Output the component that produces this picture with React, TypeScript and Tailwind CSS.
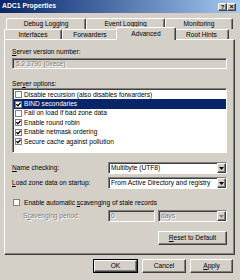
// App.tsx — ADC1 Properties (boîte de dialogue DNS, onglet Advanced), style Windows classique
import React from 'react';

const raised =
  'border border-t-white border-l-white border-r-[#404040] border-b-[#404040] shadow-[inset_-1px_-1px_0_#808080]';
const sunken =
  'border border-t-[#808080] border-l-[#808080] border-r-white border-b-white shadow-[inset_1px_1px_0_#404040]';
const emboss = 'text-[#808080] [text-shadow:1px_1px_0_#fff]';

function Check({ checked }: { checked?: boolean }) {
  return (
    <span className="w-[7px] h-[7px] flex-shrink-0 bg-white border border-[#808080] flex items-center justify-center">
      {checked && (
        <svg width="5" height="5" viewBox="0 0 5 5">
          <path d="M0.4 2.2 L1.9 3.8 L4.6 0.8" fill="none" stroke="#000" strokeWidth="1.3" />
        </svg>
      )}
    </span>
  );
}

function Select({ value, disabled, className = '' }: { value: string; disabled?: boolean; className?: string }) {
  return (
    <div className={`flex items-stretch h-[12px] ${sunken} ${disabled ? 'bg-[#d4d0c8]' : 'bg-white'} ${className}`}>
      <span className={`flex-1 pl-[2px] leading-[10px] whitespace-nowrap overflow-hidden ${disabled ? emboss : ''}`}>{value}</span>
      <span className={`w-[9px] bg-[#d4d0c8] flex items-center justify-center ${raised}`}>
        <svg width="5" height="3" viewBox="0 0 5 3">
          <path d="M0 0h5L2.5 3z" fill={disabled ? '#808080' : '#000'} />
        </svg>
      </span>
    </div>
  );
}

function Tab({ label, w, selected }: { label: string; w: number; selected?: boolean }) {
  return (
    <div
      style={{ width: w }}
      className={`flex items-center justify-center rounded-t-[2px] bg-[#d4d0c8] border-t border-l border-t-white border-l-white border-r border-r-[#404040] shadow-[inset_-1px_0_0_#808080] ${
        selected ? 'relative z-10 h-[13px] -mt-[2px] -mb-[1px] -mx-[2px] pb-[1px]' : 'h-full'
      }`}
    >
      {label}
    </div>
  );
}

const options = [
  { label: 'Disable recursion (also disables forwarders)', checked: false },
  { label: 'BIND secondaries', checked: true, active: true },
  { label: 'Fail on load if bad zone data', checked: false },
  { label: 'Enable round robin', checked: true },
  { label: 'Enable netmask ordering', checked: true },
  { label: 'Secure cache against pollution', checked: true },
];

export default function App() {
  return (
    <div className="w-[240px] h-[280px] bg-[#d4d0c8] flex flex-col overflow-hidden text-[6.6px] text-black font-['Liberation_Sans',Arial,sans-serif]">
      {/* Barre de titre */}
      <div className="h-[13px] flex items-center justify-between pl-[2px] pr-[4px] bg-gradient-to-r from-[#0a246a] to-[#a6caf0]">
        <span className="text-white font-bold text-[6.8px]">ADC1 Properties</span>
        <div className="flex">
          <span className={`w-[9px] h-[8px] bg-[#d4d0c8] flex items-center justify-center font-bold text-[6px] leading-none ${raised}`}>?</span>
          <span className={`w-[9px] h-[8px] bg-[#d4d0c8] flex items-center justify-center font-bold text-[7px] leading-none ${raised}`}>×</span>
        </div>
      </div>

      {/* Onglets */}
      <div className="flex ml-[6px] mt-[5px] h-[11px]">
        <Tab label="Debug Logging" w={80} />
        <Tab label="Event Logging" w={79} />
        <Tab label="Monitoring" w={68} />
      </div>
      <div className="flex ml-[4px] h-[10px]">
        <Tab label="Interfaces" w={58} />
        <Tab label="Forwarders" w={56} />
        <Tab label="Advanced" w={60} selected />
        <Tab label="Root Hints" w={55} />
      </div>

      {/* Panneau */}
      <div className="ml-[4px] w-[231px] h-[216px] flex flex-col px-[7px] border border-t-white border-l-white border-r-[#404040] border-b-[#404040] shadow-[inset_-1px_-1px_0_#808080]">
        <div className="mt-[7px] h-[9px] leading-[9px]">
          <u>S</u>erver version number:
        </div>
        <div className={`mt-[2px] h-[11px] pl-[3px] leading-[9px] bg-[#d4d0c8] ${sunken}`}>
          <span className={emboss}>5.2 3790 (0xece)</span>
        </div>

        <div className="mt-[10px] h-[9px] leading-[9px]">
          Ser<u>v</u>er options:
        </div>
        <div className={`h-[65px] bg-white pt-[1px] pl-[1px] ${sunken}`}>
          {options.map((o) => (
            <div
              key={o.label}
              className={`h-[9.4px] flex items-center pl-[1px] ${o.active ? 'bg-[#0a246a] text-white' : ''}`}
            >
              <Check checked={o.checked} />
              <span className="leading-[8px] px-[1px] ml-[1px]">{o.label}</span>
            </div>
          ))}
        </div>

        <div className="mt-[9px] flex items-center h-[12px]">
          <span className="w-[96px]">
            <u>N</u>ame checking:
          </span>
          <Select value="Multibyte (UTF8)" className="flex-1" />
        </div>
        <div className="mt-[3px] flex items-center h-[12px]">
          <span className="w-[96px]">
            <u>L</u>oad zone data on startup:
          </span>
          <Select value="From Active Directory and registry" className="flex-1" />
        </div>

        <div className="mt-[8px] flex items-center h-[11px] pl-[1px] gap-[4px]">
          <span className="w-[7px] h-[7px] bg-white border border-[#808080]" />
          <span>
            Enable automatic <u>s</u>cavenging of stale records
          </span>
        </div>
        <div className="mt-[2px] flex items-center h-[12px]">
          <span className={`w-[96px] pl-[11px] ${emboss}`}>
            S<u>c</u>avenging period:
          </span>
          <div className={`w-[47px] h-[12px] pl-[2px] leading-[10px] bg-[#d4d0c8] ${sunken}`}>
            <span className={emboss}>0</span>
          </div>
          <Select value="days" disabled className="ml-[3px] flex-1" />
        </div>

        <div className="mt-[9px] flex justify-end">
          <button className={`w-[69px] h-[14px] bg-[#d4d0c8] flex items-center justify-center ${raised}`}>
            <span>
              <u>R</u>eset to Default
            </span>
          </button>
        </div>
      </div>

      {/* Boutons du bas */}
      <div className="mt-[4px] flex justify-end gap-[4px] pr-[7px]">
        <div className="w-[45px] h-[14px] border border-black">
          <button className={`w-full h-full bg-[#d4d0c8] flex items-center justify-center ${raised}`}>OK</button>
        </div>
        <button className={`w-[44px] h-[14px] bg-[#d4d0c8] flex items-center justify-center ${raised}`}>Cancel</button>
        <button className={`w-[43px] h-[14px] bg-[#d4d0c8] flex items-center justify-center ${raised}`}>
          <span>
            <u>A</u>pply
          </span>
        </button>
      </div>
    </div>
  );
}
